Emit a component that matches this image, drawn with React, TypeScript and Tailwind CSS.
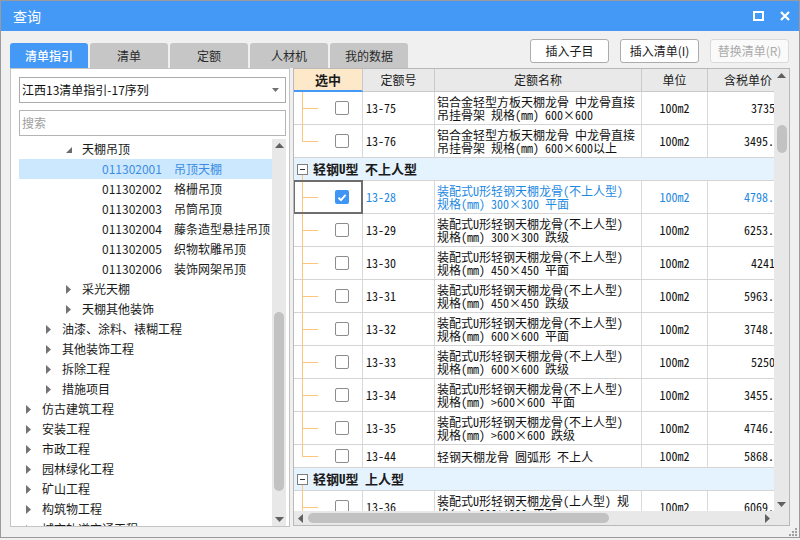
import React from 'react'

type TreeNode = {
  level: number
  label: string
  code?: string
  state?: 'open' | 'closed'
  selected?: boolean
}

const tree: TreeNode[] = [
  { level: 2, label: '天棚吊顶', state: 'open' },
  { level: 3, code: '011302001', label: '吊顶天棚', selected: true },
  { level: 3, code: '011302002', label: '格栅吊顶' },
  { level: 3, code: '011302003', label: '吊筒吊顶' },
  { level: 3, code: '011302004', label: '藤条造型悬挂吊顶' },
  { level: 3, code: '011302005', label: '织物软雕吊顶' },
  { level: 3, code: '011302006', label: '装饰网架吊顶' },
  { level: 2, label: '采光天棚', state: 'closed' },
  { level: 2, label: '天棚其他装饰', state: 'closed' },
  { level: 1, label: '油漆、涂料、裱糊工程', state: 'closed' },
  { level: 1, label: '其他装饰工程', state: 'closed' },
  { level: 1, label: '拆除工程', state: 'closed' },
  { level: 1, label: '措施项目', state: 'closed' },
  { level: 0, label: '仿古建筑工程', state: 'closed' },
  { level: 0, label: '安装工程', state: 'closed' },
  { level: 0, label: '市政工程', state: 'closed' },
  { level: 0, label: '园林绿化工程', state: 'closed' },
  { level: 0, label: '矿山工程', state: 'closed' },
  { level: 0, label: '构筑物工程', state: 'closed' },
  { level: 0, label: '城市轨道交通工程', state: 'closed' },
]

type Row =
  | { kind: 'group'; title: string }
  | {
      kind: 'item'
      no: string
      lines: string[]
      price: string
      last?: boolean
      checked?: boolean
    }

const U = '装配式U形轻钢天棚龙骨(不上人型)'

const rows: Row[] = [
  { kind: 'item', no: '13-75', lines: ['铝合金轻型方板天棚龙骨 中龙骨直接', '吊挂骨架 规格(mm) 600×600'], price: '3735' },
  { kind: 'item', no: '13-76', lines: ['铝合金轻型方板天棚龙骨 中龙骨直接', '吊挂骨架 规格(mm) 600×600以上'], price: '3495.44', last: true },
  { kind: 'group', title: '轻钢U型 不上人型' },
  { kind: 'item', no: '13-28', lines: [U, '规格(mm) 300×300 平面'], price: '4798.66', checked: true },
  { kind: 'item', no: '13-29', lines: [U, '规格(mm) 300×300 跌级'], price: '6253.43' },
  { kind: 'item', no: '13-30', lines: [U, '规格(mm) 450×450 平面'], price: '4241' },
  { kind: 'item', no: '13-31', lines: [U, '规格(mm) 450×450 跌级'], price: '5963.45' },
  { kind: 'item', no: '13-32', lines: [U, '规格(mm) 600×600 平面'], price: '3748.57' },
  { kind: 'item', no: '13-33', lines: [U, '规格(mm) 600×600 跌级'], price: '5250' },
  { kind: 'item', no: '13-34', lines: [U, '规格(mm) >600×600 平面'], price: '3455.84' },
  { kind: 'item', no: '13-35', lines: [U, '规格(mm) >600×600 跌级'], price: '4746.54' },
  { kind: 'item', no: '13-44', lines: ['轻钢天棚龙骨 圆弧形 不上人'], price: '5868.12', last: true },
  { kind: 'group', title: '轻钢U型 上人型' },
  { kind: 'item', no: '13-36', lines: ['装配式U形轻钢天棚龙骨(上人型) 规', '格(mm) 300×300 平面'], price: '6069.31' },
]

const ORANGE = '#fcc77c'

function Caret({ state }: { state?: 'open' | 'closed' }) {
  if (state === 'open')
    return (
      <svg width="6" height="6" className="ml-[47px] mt-[4px]">
        <polygon points="6,0 6,6 0,6" fill="#6b6b6b" />
      </svg>
    )
  if (state === 'closed')
    return (
      <svg width="5" height="9">
        <polygon points="0,0 5,4.5 0,9" fill="#737373" />
      </svg>
    )
  return null
}

function TreeRow({ node }: { node: TreeNode }) {
  return (
    <div
      className={`h-[20px] flex items-center whitespace-nowrap text-[12px] leading-[20px] ${
        node.selected ? 'bg-[#cce8ff] text-[#3b8de3]' : 'text-[#1a1a1a]'
      }`}
    >
      <div className="shrink-0" style={{ width: node.level * 20 }} />
      <div className="w-[23px] shrink-0 flex items-center pl-[7px]">
        {node.state === 'closed' && <Caret state="closed" />}
      </div>
      {node.state === 'open' && (
        <svg width="6" height="6" className="-ml-[16px] mr-[10px] mt-[2px]">
          <polygon points="6,0 6,6 0,6" fill="#6b6b6b" />
        </svg>
      )}
      {node.code && <span className="w-[72px] shrink-0">{node.code}</span>}
      <span>{node.label}</span>
    </div>
  )
}

function UpArrow() {
  return (
    <svg width="9" height="5">
      <polygon points="0,5 4.5,0 9,5" fill="#606060" />
    </svg>
  )
}

function DownArrow() {
  return (
    <svg width="9" height="5">
      <polygon points="0,0 9,0 4.5,5" fill="#606060" />
    </svg>
  )
}

function Checkbox({ checked }: { checked?: boolean }) {
  if (checked)
    return (
      <div className="w-[14px] h-[14px] rounded-[2px] bg-[#3e95f5] flex items-center justify-center">
        <svg width="10" height="9">
          <path d="M1.5 4.8 L4 7.2 L8.6 1.8" stroke="white" strokeWidth="1.9" fill="none" />
        </svg>
      </div>
    )
  return <div className="w-[14px] h-[14px] rounded-[2px] border border-[#8c8c8c] bg-white" />
}

function SelCell({ h, last, checked }: { h: number; last?: boolean; checked?: boolean }) {
  const mid = Math.floor(h / 2) + 0.5
  return (
    <div className="relative w-[69px] shrink-0 h-full border-r border-[#d9d9d9] flex items-center">
      <svg className="absolute left-0 top-0" width="30" height={h + 1}>
        <line x1="8.5" y1="0" x2="8.5" y2={last ? mid : h + 1} stroke={ORANGE} />
        <line x1="8" y1={mid} x2="24" y2={mid} stroke={ORANGE} />
      </svg>
      <div className="ml-[41px]">
        <Checkbox checked={checked} />
      </div>
      {checked && (
        <div className="absolute -left-px -top-px -bottom-px right-[-1px] border-2 border-[#6e6e6e]" />
      )}
    </div>
  )
}

function TableRow({ row }: { row: Row }) {
  if (row.kind === 'group') {
    return (
      <div className="relative h-[23px] shrink-0 border-b border-[#d4d4d4] bg-[#e5f3ff] flex items-center pl-[3px]">
        <div className="w-[11px] h-[11px] border border-[#7d7d7d] bg-white flex items-center justify-center">
          <div className="w-[5px] h-px bg-[#333]" />
        </div>
        <span className="ml-[5px] text-[13px] font-bold text-[#1a1a1a] whitespace-nowrap">{row.title}</span>
        <svg className="absolute left-0 top-[17px]" width="10" height="6">
          <line x1="8.5" y1="0" x2="8.5" y2="6" stroke={ORANGE} />
        </svg>
      </div>
    )
  }
  const two = row.lines.length > 1
  const h = two ? 32 : 22
  const color = row.checked ? 'text-[#1f8ae2]' : 'text-[#111]'
  return (
    <div className={`flex shrink-0 border-b border-[#d4d4d4] text-[12px] ${color} ${two ? 'h-[33px]' : 'h-[23px]'}`}>
      <SelCell h={h} last={row.last} checked={row.checked} />
      <div className="w-[72px] shrink-0 border-r border-[#d9d9d9] flex items-center pl-[3px] whitespace-nowrap">
        {row.no}
      </div>
      <div className="w-[207px] shrink-0 border-r border-[#d9d9d9] flex flex-col justify-center pl-[2px] leading-[13px] whitespace-nowrap overflow-hidden">
        {row.lines.map((l, i) => (
          <div key={i}>{l}</div>
        ))}
      </div>
      <div className="w-[66px] shrink-0 border-r border-[#d9d9d9] flex items-center justify-center">100m2</div>
      <div className="w-[80px] shrink-0 flex items-center justify-end pr-[13px]">
        <div className="w-[31px] overflow-hidden whitespace-nowrap text-right">{row.price}</div>
      </div>
    </div>
  )
}

const tabs = ['清单指引', '清单', '定额', '人材机', '我的数据']

export default function App() {
  return (
    <div className="w-[800px] h-[540px] bg-[#f0f0f0] font-['Noto_Sans_CJK_SC','Noto_Sans',sans-serif]">
      <div className="w-[800px] h-[538px] border border-[#9a9a9a] flex flex-col overflow-hidden">
        {/* Title bar */}
        <div className="h-[30px] shrink-0 bg-[#4499f7] flex items-center justify-between pl-[12px] pr-[9px]">
          <span className="text-white text-[14px] leading-none">查询</span>
          <div className="flex items-center gap-[16px]">
            <svg width="11" height="10">
              <rect x="1" y="1" width="9" height="8" stroke="white" strokeWidth="2" fill="none" />
            </svg>
            <svg width="10" height="10">
              <path d="M1 1 L9 9 M9 1 L1 9" stroke="white" strokeWidth="2.2" />
            </svg>
          </div>
        </div>

        <div className="flex-1 flex flex-col pl-[9px] pr-[9px]">
          {/* Tabs + buttons */}
          <div className="h-[37px] shrink-0 flex justify-between">
            <div className="flex items-end gap-[2px]">
              {tabs.map((t, i) => (
                <div
                  key={t}
                  className={`w-[78px] h-[25px] rounded-t-[3px] flex items-center justify-center text-[12px] ${
                    i === 0 ? 'bg-[#4499f7] text-white font-medium' : 'bg-[#c6c6c6] text-[#2a2a2a]'
                  }`}
                >
                  {t}
                </div>
              ))}
            </div>
            <div className="flex gap-[11px] mt-[8px] mr-px">
              {['插入子目', '插入清单(I)'].map(b => (
                <div
                  key={b}
                  className="w-[79px] h-[24px] rounded-[3px] border border-[#acacac] bg-white flex items-center justify-center text-[12px] text-[#1a1a1a]"
                >
                  {b}
                </div>
              ))}
              <div className="w-[79px] h-[24px] rounded-[3px] border border-[#dadada] bg-[#fafafa] flex items-center justify-center text-[12px] text-[#ababab]">
                替换清单(R)
              </div>
            </div>
          </div>

          {/* Content */}
          <div className="h-[459px] shrink-0 flex gap-[3px]">
            {/* Left panel */}
            <div className="w-[280px] h-full border border-[#c4c4c4] bg-white flex flex-col pl-[8px] pr-[3px] pt-[8px]">
              <div className="h-[26px] shrink-0 border border-[#ababab] flex items-center justify-between pl-[2px] pr-[6px] text-[12px] text-[#111]">
                <span>江西13清单指引-17序列</span>
                <svg width="7" height="4">
                  <polygon points="0,0 7,0 3.5,4" fill="#707070" />
                </svg>
              </div>
              <div className="h-[26px] shrink-0 mt-[7px] border border-[#b4b4b4] flex items-center pl-[2px] text-[12px] text-[#a0a0a0]">
                搜索
              </div>
              <div className="flex-1 mt-[3px] flex overflow-hidden">
                <div className="flex-1 overflow-hidden">
                  {tree.map((n, i) => (
                    <TreeRow key={i} node={n} />
                  ))}
                </div>
                <div className="w-[14px] shrink-0 bg-[#e8e8e8] flex flex-col items-center">
                  <div className="h-[13px] flex items-center justify-center">
                    <UpArrow />
                  </div>
                  <div className="mt-[160px] w-[10px] h-[179px] rounded-full bg-[#c2c2c2]" />
                  <div className="flex-1" />
                  <div className="h-[14px] flex items-center justify-center">
                    <DownArrow />
                  </div>
                </div>
              </div>
            </div>

            {/* Table */}
            <div className="w-[497px] h-[458px] border border-[#b9b9b9] bg-white flex flex-col font-['Noto_Sans_Mono_CJK_SC','Noto_Sans_CJK_SC',monospace]">
              <div className="flex-1 flex overflow-hidden">
                <div className="flex-1 flex flex-col overflow-hidden">
                  <div className="h-[23px] shrink-0 flex text-[12px] text-[#1a1a1a] font-['Noto_Sans_CJK_SC',sans-serif]">
                    <div className="w-[69px] shrink-0 bg-[#fee8ca] border-r border-[#c9c9c9] border-b-2 border-b-[#4499f7] flex items-center justify-center font-bold text-[13px]">
                      选中
                    </div>
                    <div className="w-[72px] shrink-0 bg-[#e9e9e9] border-r border-b border-[#c9c9c9] flex items-center justify-center">
                      定额号
                    </div>
                    <div className="w-[207px] shrink-0 bg-[#e9e9e9] border-r border-b border-[#c9c9c9] flex items-center justify-center">
                      定额名称
                    </div>
                    <div className="w-[66px] shrink-0 bg-[#e9e9e9] border-r border-b border-[#c9c9c9] flex items-center justify-center">
                      单位
                    </div>
                    <div className="w-[80px] shrink-0 bg-[#e9e9e9] border-b border-[#c9c9c9] flex items-center justify-center">
                      含税单价
                    </div>
                  </div>
                  <div className="flex-1 flex flex-col overflow-hidden">
                    {rows.map((r, i) => (
                      <TableRow key={i} row={r} />
                    ))}
                  </div>
                </div>
                <div className="w-[15px] shrink-0 bg-[#e8e8e8] flex flex-col items-center">
                  <div className="h-[13px] flex items-center justify-center">
                    <UpArrow />
                  </div>
                  <div className="mt-[43px] w-[10px] h-[28px] rounded-full bg-[#c2c2c2]" />
                  <div className="flex-1" />
                  <div className="h-[14px] flex items-center justify-center">
                    <DownArrow />
                  </div>
                </div>
              </div>
              <div className="h-[14px] shrink-0 flex bg-[#e8e8e8]">
                <div className="flex-1 flex items-center">
                  <div className="w-[13px] flex items-center justify-center">
                    <svg width="5" height="9">
                      <polygon points="5,0 0,4.5 5,9" fill="#606060" />
                    </svg>
                  </div>
                  <div className="ml-px w-[301px] h-[10px] rounded-full bg-[#c2c2c2]" />
                  <div className="flex-1" />
                  <div className="w-[14px] flex items-center justify-center">
                    <svg width="5" height="9">
                      <polygon points="0,0 5,4.5 0,9" fill="#606060" />
                    </svg>
                  </div>
                </div>
                <div className="w-[15px] shrink-0 bg-[#e8e8e8]" />
              </div>
            </div>
          </div>

          <div className="flex-1 flex justify-end items-end">
            <svg width="10" height="10" className="-mr-[8px] mb-[1px]">
              <rect x="7" y="1" width="2" height="2" fill="#a0a0a0" />
              <rect x="4" y="4" width="2" height="2" fill="#a0a0a0" />
              <rect x="7" y="4" width="2" height="2" fill="#a0a0a0" />
              <rect x="1" y="7" width="2" height="2" fill="#a0a0a0" />
              <rect x="4" y="7" width="2" height="2" fill="#a0a0a0" />
              <rect x="7" y="7" width="2" height="2" fill="#a0a0a0" />
            </svg>
          </div>
        </div>
      </div>
    </div>
  )
}
